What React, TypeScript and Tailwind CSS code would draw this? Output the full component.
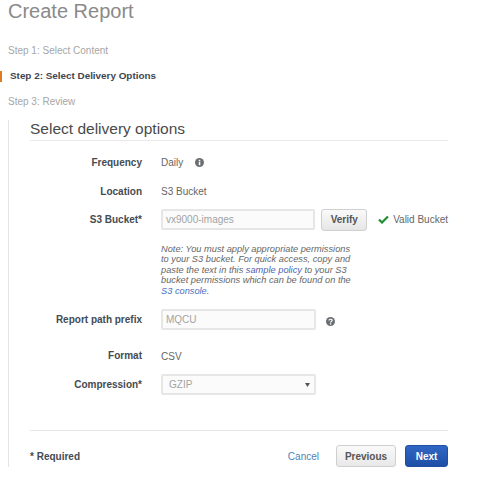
export default function App() {
  const label = "w-[112px] shrink-0 text-right font-bold text-[#444b52] text-[10px] leading-[14px]";
  const field = "h-[21px] w-[155px] rounded-[2px] border-2 border-[#e6e6e6] bg-[#fbfbfb] pl-[3px] flex items-center text-[#a3a3a3] text-[10px]";
  return (
    <div className="w-[478px] h-[484px] overflow-hidden bg-white font-['Liberation_Sans',Arial,sans-serif] text-[10px] text-[#555]">
      <h1 className="pl-2 h-[41px] text-[20px] leading-[23px] text-[#8a8a8a]">Create Report</h1>
      <div className="pl-2 mt-[3px] h-[14px] leading-[14px] text-[#a6a6a6]">Step 1: Select Content</div>
      <div className="mt-[11px] h-[14px] flex items-center">
        <div className="w-[2px] h-[11px] bg-[#e07b1f]" />
        <div className="pl-2 font-bold text-[9.9px] leading-[14px] text-[#3f4650]">Step 2: Select Delivery Options</div>
      </div>
      <div className="pl-2 mt-[12px] h-[14px] leading-[14px] text-[#a6a6a6]">Step 3: Review</div>

      <div className="ml-2 mt-[11px] w-[440px] h-[347px] border-l-[1px] border-[#e4e4e4] pl-[21px] flex flex-col">
        <h2 className="h-[21px] border-b border-[#eaeaea] text-[15.5px] leading-[18px] text-[#4a4a4a] box-content pb-0">Select delivery options</h2>

        <div className="mt-[15px] h-[14px] flex items-center">
          <div className={label}>Frequency</div>
          <div className="ml-[19px] text-[#666]">Daily</div>
          <svg className="ml-[12px]" width="9" height="9" viewBox="0 0 10 10">
            <circle cx="5" cy="5" r="5" fill="#6b6f73" />
            <rect x="4.2" y="4.2" width="1.7" height="3.8" fill="#fff" />
            <rect x="4.2" y="2" width="1.7" height="1.5" fill="#fff" />
          </svg>
        </div>
        <div className="mt-[15px] h-[14px] flex items-center">
          <div className={label}>Location</div>
          <div className="ml-[19px] text-[#666]">S3 Bucket</div>
        </div>

        <div className="mt-[10px] h-[22px] flex items-center">
          <div className={label}>S3 Bucket*</div>
          <div className={`ml-[19px] ${field}`}>vx9000-images</div>
          <button className="ml-[6px] w-[46px] h-[22px] rounded-[3px] border border-[#cfcfcf] bg-gradient-to-b from-[#fafafa] to-[#e6e6e6] font-bold text-[10px] text-[#555]">Verify</button>
          <svg className="ml-[11px]" width="11" height="9" viewBox="0 0 11 9">
            <path d="M1 4.5 L4 7.5 L10 1.5" fill="none" stroke="#1d8f2e" strokeWidth="2.2" />
          </svg>
          <div className="ml-[4px] whitespace-nowrap text-[#666]">Valid Bucket</div>
        </div>

        <p className="ml-[131px] mt-[13px] whitespace-nowrap text-[9.25px] leading-[10.5px] italic text-[#666]">
          Note: You must apply appropriate permissions<br />
          to your S3 bucket. For quick access, copy and<br />
          paste the text in this <span className="text-[#4a63b5]">sample policy</span> to your S3<br />
          bucket permissions which can be found on the<br />
          <span className="text-[#4a6fc0]">S3 console</span>.
        </p>

        <div className="mt-[13px] h-[21px] flex items-center">
          <div className={label}>Report path prefix</div>
          <div className={`ml-[19px] ${field}`}>MQCU</div>
          <svg className="ml-[10px] mt-[3px]" width="9" height="9" viewBox="0 0 10 10">
            <circle cx="5" cy="5" r="5" fill="#6b6f73" />
            <path d="M3.3 4 C3.3 2 6.8 2 6.8 3.8 C6.8 5 5 5 5 6.2" fill="none" stroke="#fff" strokeWidth="1.3" />
            <rect x="4.3" y="7" width="1.5" height="1.4" fill="#fff" />
          </svg>
        </div>

        <div className="mt-[19px] h-[14px] flex items-center">
          <div className={label}>Format</div>
          <div className="ml-[19px] text-[#666]">CSV</div>
        </div>

        <div className="mt-[11px] h-[21px] flex items-center">
          <div className={label}>Compression*</div>
          <div className={`ml-[19px] ${field} justify-between !pl-[6px] pr-[4px]`}>
            <span>GZIP</span>
            <svg width="5" height="4" viewBox="0 0 5 4"><path d="M0 0 H5 L2.5 4 Z" fill="#555" /></svg>
          </div>
        </div>

        <div className="mt-[35px] h-px shrink-0 bg-[#e6e6e6]" />

        <div className="mt-[14px] h-[22px] flex items-center">
          <div className="font-bold text-[#444b52]">* Required</div>
          <div className="ml-auto text-[#4f7fb5]">Cancel</div>
          <button className="ml-[17px] w-[60px] h-[22px] rounded-[3px] border border-[#cfcfcf] bg-gradient-to-b from-[#fafafa] to-[#e8e8e8] font-bold text-[10px] text-[#555]">Previous</button>
          <button className="ml-[9px] w-[43px] h-[22px] rounded-[3px] border border-[#1f4ea3] bg-gradient-to-b from-[#3067c4] to-[#1f4fa6] font-bold text-[10px] text-white">Next</button>
        </div>
      </div>
    </div>
  );
}
